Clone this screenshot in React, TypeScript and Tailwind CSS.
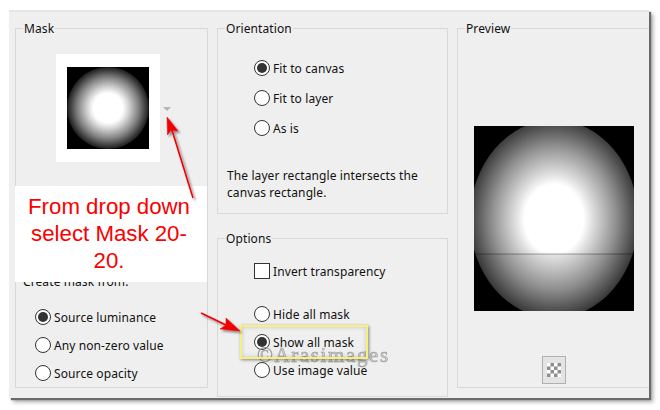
import React from "react"

function Radio({ label, checked = false }: { label: string; checked?: boolean }): React.ReactElement {
  return (
    <div className="flex h-[16px] items-center gap-[3px]">
      <span className="flex h-[16px] w-[16px] items-center justify-center rounded-full border border-[#333333] bg-white">
        {checked && <span className="h-[10px] w-[10px] rounded-full bg-[#333333]" />}
      </span>
      <span className="mt-[2px] leading-[16px]">{label}</span>
    </div>
  )
}

function Group({ title, className, children }: { title: string; className: string; children: React.ReactNode }): React.ReactElement {
  return (
    <fieldset className={`border border-[#d8d8d8] ${className}`}>
      <legend className="ml-[7px] h-[16px] px-[1px] leading-[18px]">{title}</legend>
      {children}
    </fieldset>
  )
}

export default function App(): React.ReactElement {
  return (
    <div className="relative h-[410px] w-[660px] overflow-hidden bg-white pl-[9px] pt-[10px] font-['Noto_Sans',sans-serif] text-[12px] tracking-[0.1px] text-[#111111]">
      <div className="flex h-[388px] w-[640px] gap-[9px] border-t-2 border-t-[#e6e6e6] bg-[#efefef] pl-[6px] pt-[8px] shadow-[2px_2px_1px_#6a6a6a,4px_4px_4px_rgba(0,0,0,0.35)]">
        <Group title="Mask" className="h-[368px] w-[193px]">
          <div className="ml-[40px] mt-[18px] flex items-center">
            <div className="flex h-[108px] w-[104px] items-center justify-center bg-white">
              <svg width="82" height="82" viewBox="0 0 82 82">
                <defs>
                  <radialGradient id="thumb">
                    <stop offset="0.36" stopColor="#ffffff" />
                    <stop offset="0.48" stopColor="#dcdcdc" />
                    <stop offset="0.75" stopColor="#808080" />
                    <stop offset="1" stopColor="#1c1c1c" />
                  </radialGradient>
                </defs>
                <rect width="82" height="82" fill="#000000" />
                <circle cx="41" cy="41" r="41" fill="url(#thumb)" />
              </svg>
            </div>
            <span className="ml-[3px] mt-[1px] h-0 w-0 border-x-[4px] border-t-[4px] border-x-transparent border-t-[#b5b5b5]" />
          </div>
          <p className="ml-[7px] mt-[112px] leading-[16px]">Create mask from:</p>
          <div className="ml-[19px] mt-[19px] flex flex-col gap-[12px]">
            <Radio label="Source luminance" checked />
            <Radio label="Any non-zero value" />
            <Radio label="Source opacity" />
          </div>
        </Group>

        <div className="flex w-[231px] flex-col gap-[16px]">
          <Group title="Orientation" className="h-[194px]">
            <div className="ml-[36px] mt-[24px] flex flex-col gap-[14px]">
              <Radio label="Fit to canvas" checked />
              <Radio label="Fit to layer" />
              <Radio label="As is" />
            </div>
            <p className="ml-[9px] mt-[31px] w-[215px] leading-[17px]">The layer rectangle intersects the canvas rectangle.</p>
          </Group>
          <Group title="Options" className="h-[167px]">
            <div className="ml-[36px] mt-[17px] flex h-[16px] items-center gap-[3px]">
              <span className="h-[16px] w-[16px] border border-[#333333] bg-white" />
              <span className="mt-[2px] leading-[16px]">Invert transparency</span>
            </div>
            <div className="ml-[36px] mt-[27px] flex flex-col gap-[12px]">
              <Radio label="Hide all mask" />
              <Radio label="Show all mask" checked />
              <Radio label="Use image value" />
            </div>
          </Group>
        </div>

        <Group title="Preview" className="h-[368px] flex-1 border-r-0">
          <div className="ml-[16px] mt-[90px]">
            <svg width="160" height="185" viewBox="0 0 160 185" className="block">
              <defs>
                <radialGradient id="top" cx="80" cy="93" r="1" gradientUnits="userSpaceOnUse" gradientTransform="translate(80 93) scale(84 99) translate(-80 -93)">
                  <stop offset="0.35" stopColor="#ffffff" />
                  <stop offset="0.46" stopColor="#dedede" />
                  <stop offset="0.72" stopColor="#959595" />
                  <stop offset="1" stopColor="#3c3c3c" />
                </radialGradient>
                <radialGradient id="bottom" cx="80" cy="93" r="1" gradientUnits="userSpaceOnUse" gradientTransform="translate(80 93) scale(84 99) translate(-80 -93)">
                  <stop offset="0.35" stopColor="#e6e6e6" />
                  <stop offset="0.46" stopColor="#cccccc" />
                  <stop offset="0.72" stopColor="#8c8c8c" />
                  <stop offset="1" stopColor="#383838" />
                </radialGradient>
                <clipPath id="upper">
                  <rect width="160" height="128" />
                </clipPath>
                <clipPath id="lower">
                  <rect y="128" width="160" height="57" />
                </clipPath>
              </defs>
              <rect width="160" height="185" fill="#000000" />
              <ellipse cx="80" cy="93" rx="84" ry="99" fill="url(#bottom)" clipPath="url(#lower)" />
              <ellipse cx="80" cy="93" rx="84" ry="99" fill="url(#top)" clipPath="url(#upper)" />
              <rect x="2" y="127.5" width="156" height="1" fill="#000000" opacity="0.35" />
            </svg>
          </div>
          <div className="ml-[84px] mt-[45px] flex h-[28px] w-[24px] items-center justify-center border border-[#b0b0b0] bg-[#e4e4e4]">
            <svg width="14" height="14" viewBox="0 0 14 14">
              <rect width="14" height="14" fill="#ffffff" />
              <path fill="#8f8f8f" d="M3.5 0h3.5v3.5H3.5zM10.5 0H14v3.5h-3.5zM0 3.5h3.5V7H0zM7 3.5h3.5V7H7zM3.5 7H7v3.5H3.5zM10.5 7H14v3.5h-3.5zM0 10.5h3.5V14H0zM7 10.5h3.5V14H7z" />
            </svg>
          </div>
        </Group>
      </div>

      {/* annotations drawn on top of the dialog */}
      <div className="absolute left-[15px] top-[186px] flex h-[96px] w-[192px] items-center justify-center bg-white pb-[2px] pr-[4px] text-center font-['Liberation_Sans',sans-serif] text-[22.25px] leading-[27px] tracking-normal text-[#fa0000]">
        <p>
          From drop down
          <br />
          select Mask 20-
          <br />
          20.
        </p>
      </div>
      <div className="absolute left-[257px] top-[340px] font-['Liberation_Serif',serif] text-[21px] tracking-[1.6px] text-[#c6c6c6] opacity-80 [-webkit-text-stroke:0.5px_#808080]">©Arasimages</div>
      <div className="absolute left-[240px] top-[325px] h-[34px] w-[128px] border-2 border-[#f6f17a] shadow-[1px_1px_3px_rgba(0,0,0,0.45),inset_0_0_4px_rgba(0,0,0,0.18)]" />
      <svg className="absolute left-0 top-0" width="660" height="410" viewBox="0 0 660 410">
        <defs>
          <filter id="soft" x="-30%" y="-30%" width="160%" height="160%">
            <feDropShadow dx="2" dy="2" stdDeviation="1.2" floodColor="#000000" floodOpacity="0.45" />
          </filter>
        </defs>
        <g filter="url(#soft)" fill="#f00000" stroke="#f00000" strokeLinejoin="round">
          <path d="M193 198 L171 127" strokeWidth="1.6" fill="none" />
          <path d="M167 117 L167.5 135 L171 130 L178 131 Z" strokeWidth="0.5" />
          <path d="M201 313 L228 326" strokeWidth="1.6" fill="none" />
          <path d="M240 331 L220 329 L226 325 L226 318 Z" strokeWidth="0.5" />
        </g>
      </svg>
    </div>
  )
}
